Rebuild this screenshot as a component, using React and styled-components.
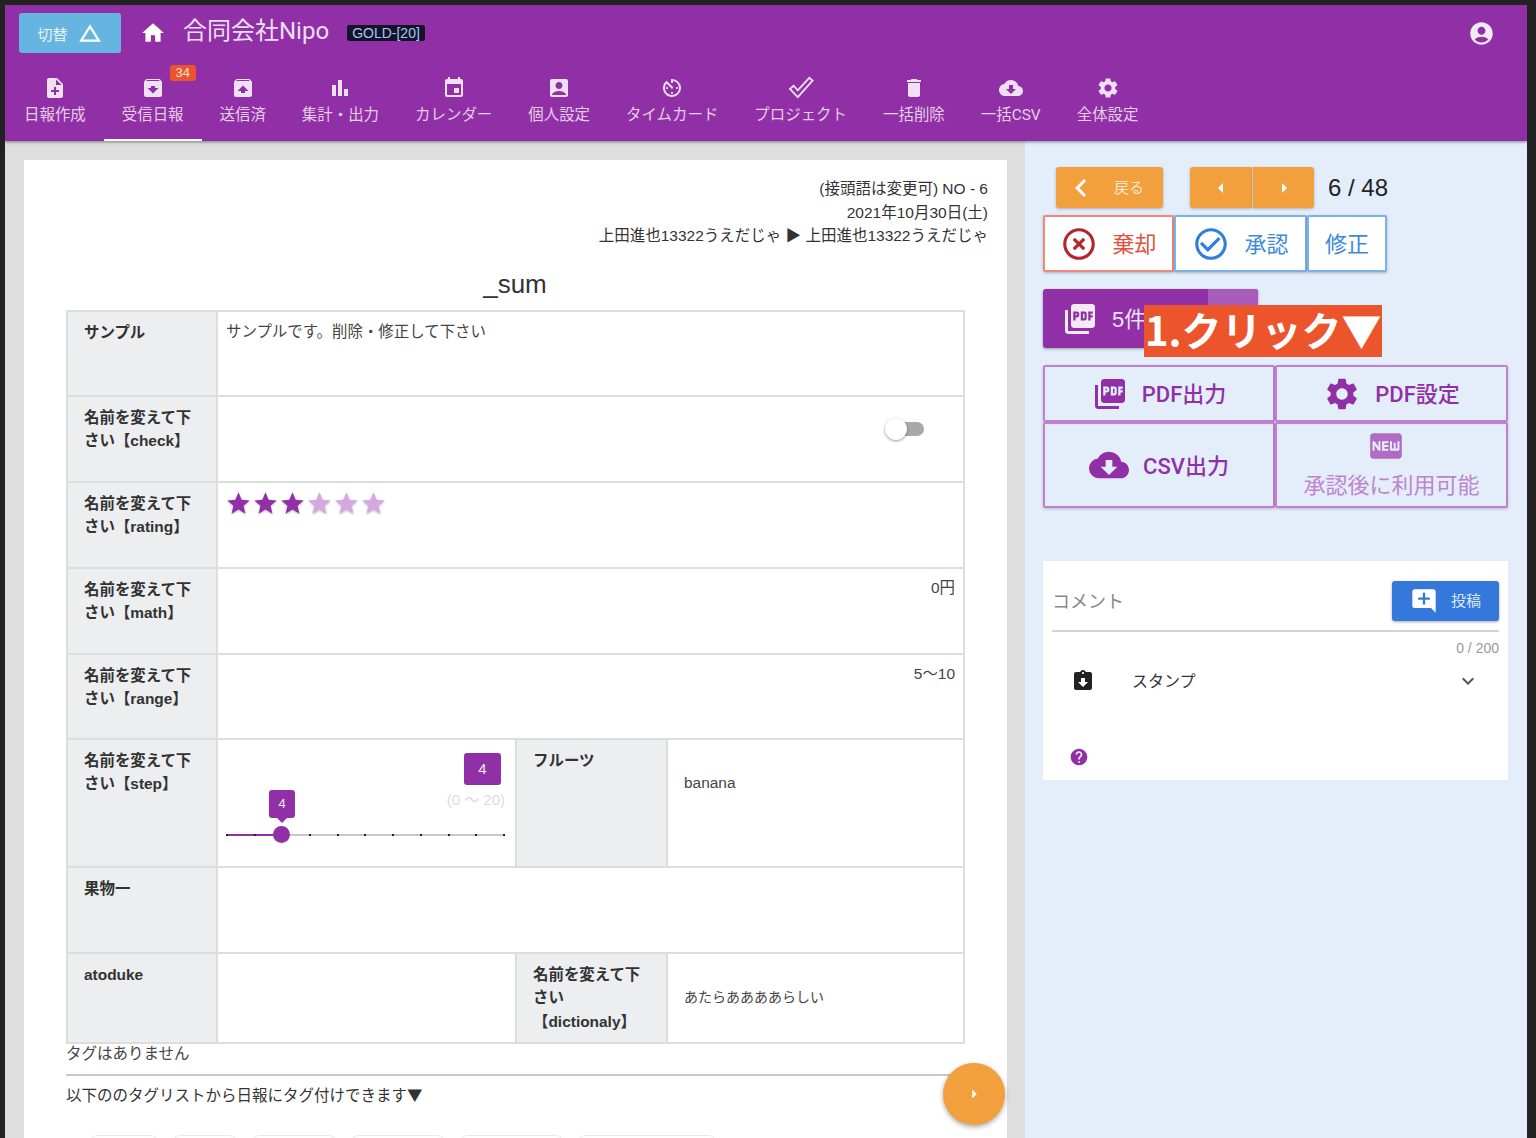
import React from 'react';
import styled, { createGlobalStyle } from 'styled-components';
import {
  MdHome, MdChangeHistory, MdNoteAdd, MdArchive, MdUnarchive, MdBarChart, MdEvent, MdAccountBox, MdAvTimer,
  MdDelete, MdCloudDownload, MdSettings, MdAccountCircle, MdPictureAsPdf, MdChevronLeft, MdArrowLeft,
  MdArrowRight, MdHighlightOff, MdCheckCircleOutline, MdFiberNew, MdAddComment, MdAssignmentReturned,
  MdExpandMore, MdHelp, MdStar,
} from 'react-icons/md';

const purple = '#9130a6';
const orange = '#f2a03d';
const sans = '"Liberation Sans", "Noto Sans CJK JP", sans-serif';

const GlobalStyle = createGlobalStyle`
  html, body {
    margin: 0;
    height: 1138px;
    overflow: hidden;
    background: #222;
  }
  * { box-sizing: border-box; }
`;

const Screen = styled.div`
  position: relative;
  width: 1522px;
  height: 1133px;
  margin: 5px 0 0 5px;
  overflow: hidden;
  font-family: ${sans};
  color: #333;
`;

const Header = styled.header`
  position: relative;
  z-index: 1;
  height: 136px;
  background: ${purple};
  color: #ecdcf0;
  box-shadow: 0 1px 3px rgba(0, 0, 0, 0.45);
`;

const TopRow = styled.div`
  display: flex;
  align-items: center;
  height: 56px;
  padding: 0 32px 0 14px;
`;

const SwitchButton = styled.button`
  display: flex;
  align-items: center;
  justify-content: center;
  gap: 9px;
  width: 102px;
  height: 40px;
  border: 0;
  border-radius: 3px;
  background: #66b5e0;
  color: #e6f3fa;
  font: 15px ${sans};
`;

const HomeLink = styled.span`
  display: flex;
  margin-left: 19px;
  color: #fff;
`;

const Title = styled.h1`
  margin: 0 0 5px 17px;
  font: 400 24px/30px Roboto, "Noto Sans CJK JP", sans-serif;
  color: #eddff1;
`;

const Plan = styled.span`
  margin-left: 18px;
  padding: 1px 5px;
  border-radius: 2px;
  background: #14132c;
  color: #a9c6ee;
  font: 14px/14px ${sans};
`;

const Account = styled.span`
  display: flex;
  margin-left: auto;
  color: #f4eaf6;
`;

const Tabs = styled.nav`
  display: flex;
  height: 80px;
  padding-left: 1px;
`;

const Tab = styled.div`
  position: relative;
  display: flex;
  flex-direction: column;
  align-items: center;
  height: 80px;
  padding: 15px 18px 0;
  border-bottom: 2px solid ${p => (p.$active ? '#fff' : 'transparent')};
  font: 15.45px/20px Roboto, "Noto Sans CJK JP", sans-serif;
  color: #e3cfe8;
  white-space: nowrap;
  svg { color: #f0e0f4; margin-bottom: 5px; }
`;

const Count = styled.span`
  position: absolute;
  top: 4px;
  left: 66px;
  width: 26px;
  height: 16px;
  border-radius: 3px;
  background: #ec552c;
  color: #fbe2d8;
  font: 13px/16px ${sans};
  text-align: center;
`;

const Body = styled.div`
  display: flex;
  height: 997px;
`;

const MainColumn = styled.main`
  width: 1020px;
  padding: 19px 18px 0 19px;
  background: #dedede;
`;

const Sheet = styled.section`
  height: 980px;
  padding: 17px 19px 0 42px;
  background: #fff;
`;

const Meta = styled.div`
  font-size: 15.5px;
  line-height: 23.5px;
  text-align: right;
  color: #333;
`;

const SheetTitle = styled.h2`
  margin: 21px 0 11px -24px;
  font: 400 26px/30px ${sans};
  text-align: center;
  color: #333;
`;

const Table = styled.div`
  display: grid;
  grid-template-columns: 150px 299px 151px 297px;
  width: 899px;
  border-top: 2px solid #ddd;
  border-left: 2px solid #ddd;
`;

const Label = styled.div`
  height: ${p => p.$h}px;
  padding: 9px 16px;
  border-right: 2px solid #ddd;
  border-bottom: 2px solid #ddd;
  background: #eceef0;
  font-size: 15.45px;
  font-weight: 700;
  line-height: 23.5px;
  color: #333;
`;

const Value = styled.div`
  grid-column: span ${p => p.$span || 1};
  display: flex;
  flex-direction: column;
  align-items: ${p => (p.$right ? 'flex-end' : 'flex-start')};
  justify-content: ${p => (p.$center ? 'center' : 'flex-start')};
  height: ${p => p.$h}px;
  padding: ${p => p.$pad || '7px 8px'};
  border-right: 2px solid #ddd;
  border-bottom: 2px solid #ddd;
  font-size: ${p => p.$size || 15.45}px;
  line-height: 23.5px;
  color: #444;
`;

const Toggle = styled.span`
  position: relative;
  display: block;
  align-self: flex-end;
  width: 28px;
  height: 14px;
  margin: 18px 31px 0 0;
  border-radius: 7px;
  background: #a9a9a9;
`;

const ToggleThumb = styled.span`
  position: absolute;
  top: -4px;
  left: -11px;
  width: 22px;
  height: 22px;
  border-radius: 50%;
  background: #fff;
  box-shadow: 0 1px 3px rgba(0, 0, 0, 0.4);
`;

const Stars = styled.div`
  display: flex;
  margin-left: -1px;
`;

const Star = styled(MdStar)`
  color: ${p => (p.$on ? purple : '#d4a9e0')};
  filter: drop-shadow(0 1px 1px rgba(0, 0, 0, 0.25));
`;

const StepCell = styled.div`
  display: flex;
  flex-direction: column;
  align-items: flex-end;
  height: 128px;
  padding: 13px 10px 0 8px;
  border-right: 2px solid #ddd;
  border-bottom: 2px solid #ddd;
`;

const StepValue = styled.span`
  width: 37px;
  height: 32px;
  margin-right: 4px;
  border-radius: 3px;
  background: ${purple};
  color: #eee;
  font-size: 15px;
  line-height: 32px;
  text-align: center;
`;

const StepRange = styled.span`
  margin-top: 4px;
  font-size: 15px;
  line-height: 22px;
  color: #dcdce4;
`;

const Slider = styled.div`
  position: relative;
  display: flex;
  justify-content: space-between;
  align-items: center;
  align-self: stretch;
  height: 2px;
  margin-top: 23px;
  background: #c8c8c8;
`;

const SliderFill = styled.span`
  position: absolute;
  left: 0;
  top: 0;
  height: 2px;
  background: ${purple};
`;

const Tick = styled.span`
  position: relative;
  width: 2px;
  height: 2px;
  background: #222;
`;

const SliderThumb = styled.span`
  position: absolute;
  top: -8px;
  left: 47px;
  width: 17px;
  height: 17px;
  border-radius: 50%;
  background: ${purple};
`;

const SliderTip = styled.span`
  position: absolute;
  top: -44px;
  left: 43px;
  width: 26px;
  height: 28px;
  border-radius: 3px;
  background: ${purple};
  color: #eee;
  font-size: 13px;
  line-height: 28px;
  text-align: center;
  &::after {
    content: '';
    position: absolute;
    left: 8px;
    bottom: -5px;
    border-top: 5px solid ${purple};
    border-left: 5px solid transparent;
    border-right: 5px solid transparent;
  }
`;

const NoTags = styled.p`
  margin: 0;
  font-size: 15.5px;
  line-height: 19px;
  color: #444;
`;

const Rule = styled.hr`
  width: 899px;
  height: 2px;
  margin: 11px 0 7px;
  border: 0;
  background: #c9c9c9;
`;

const TagHint = styled.p`
  margin: 0;
  font: 15.5px/22px "Noto Sans CJK JP", sans-serif;
  color: #333;
`;

const TagList = styled.div`
  display: flex;
  gap: 11px;
  margin: 30px 0 0 22px;
`;

const TagChip = styled.span`
  width: ${p => p.$w}px;
  height: 20px;
  border: 1px solid #e8e8e8;
  border-radius: 10px;
`;

const Fab = styled.button`
  position: absolute;
  left: 938px;
  top: 1058px;
  display: flex;
  align-items: center;
  justify-content: center;
  width: 62px;
  height: 62px;
  border: 0;
  border-radius: 50%;
  background: ${orange};
  color: #fff;
  box-shadow: 0 2px 5px rgba(0, 0, 0, 0.35);
`;

const SideColumn = styled.aside`
  display: flex;
  flex-direction: column;
  width: 502px;
  padding: 26px 19px 0 18px;
  background: #e3eefa;
`;

const PagerRow = styled.div`
  display: flex;
  align-items: center;
  height: 41px;
  margin-left: 13px;
`;

const OrangeButton = styled.button`
  display: flex;
  align-items: center;
  justify-content: center;
  width: ${p => p.$w}px;
  height: 41px;
  padding: 0;
  border: 0;
  border-radius: ${p => p.$radius || '3px'};
  background: ${orange};
  color: #fff;
  font: 15px ${sans};
  box-shadow: 0 1px 3px rgba(0, 0, 0, 0.25);
`;

const BackButton = styled(OrangeButton)`
  justify-content: flex-start;
  padding-left: 7px;
`;

const BackLabel = styled.span`
  margin: 0 0 2px 15px;
  color: #fbe6cc;
`;

const PagerGroup = styled.div`
  display: flex;
  gap: 1px;
  margin-left: 27px;
`;

const PageCount = styled.span`
  margin-left: 14px;
  font: 24px ${sans};
  color: #222;
`;

const ReviewGroup = styled.div`
  display: flex;
  height: 57px;
  margin-top: 7px;
`;

const ReviewButton = styled.button`
  display: flex;
  align-items: center;
  justify-content: center;
  gap: 14px;
  width: ${p => p.$w}px;
  height: 57px;
  padding: 0 0 3px;
  border: 2px solid ${p => p.$edge};
  border-radius: 2px;
  background: #fff;
  color: ${p => p.$color};
  font: 22px ${sans};
  box-shadow: 0 1px 3px rgba(0, 0, 0, 0.25);
  svg { margin-top: 3px; }
`;

const RejectIcon = styled(MdHighlightOff)`
  color: #b3262a;
`;

const ApproveIcon = styled(MdCheckCircleOutline)`
  color: #2f7fdb;
`;

const BulkButton = styled.button`
  display: flex;
  align-items: stretch;
  width: 215px;
  height: 59px;
  margin-top: 17px;
  padding: 0;
  border: 0;
  border-radius: 3px;
  overflow: hidden;
  background: ${purple};
  color: #f0e2f4;
  font: 22px ${sans};
  box-shadow: 0 1px 3px rgba(0, 0, 0, 0.35);
`;

const BulkMain = styled.span`
  display: flex;
  align-items: center;
  gap: 14px;
  width: 165px;
  padding: 0 0 3px 19px;
  svg { margin-top: 3px; }
`;

const BulkMore = styled.span`
  flex: 1;
  background: #a85bba;
`;

const Callout = styled.div`
  position: absolute;
  left: 1139px;
  top: 300px;
  width: 238px;
  height: 52px;
  padding-left: 1px;
  background: #ec552c;
  color: #fff;
  font: 700 40px/48px "Noto Sans CJK JP", sans-serif;
  white-space: nowrap;
`;

const ExportGrid = styled.div`
  display: grid;
  grid-template-columns: 232px 233px;
  grid-template-rows: 57px 86px;
  margin-top: 17px;
`;

const ExportButton = styled.button`
  display: flex;
  align-items: center;
  justify-content: center;
  gap: 14px;
  padding: 0 0 3px;
  border: 2px solid #c27fd2;
  border-radius: 2px;
  background: transparent;
  color: ${purple};
  font: 500 22px Roboto, "Noto Sans CJK JP", sans-serif;
  box-shadow: 0 1px 3px rgba(0, 0, 0, 0.2);
  svg { margin-top: 3px; }
`;

const ExportNote = styled(ExportButton)`
  flex-direction: column;
  gap: 2px;
  padding: 0 0 5px;
  color: #c084cf;
  font-weight: 400;
  svg { margin: 0 12px 0 0; color: #b06cc2; }
`;

const CommentCard = styled.section`
  height: 219px;
  margin-top: 53px;
  padding: 21px 9px 0;
  background: #fff;
`;

const CommentRow = styled.div`
  display: flex;
  align-items: center;
  justify-content: space-between;
  height: 50px;
  padding-bottom: 10px;
  border-bottom: 2px solid #d5d5d5;
`;

const CommentLabel = styled.span`
  margin-bottom: 2px;
  font-size: 18px;
  color: #888;
`;

const PostButton = styled.button`
  display: flex;
  align-items: center;
  justify-content: center;
  gap: 13px;
  width: 107px;
  height: 40px;
  padding: 0 0 3px;
  border: 0;
  border-radius: 3px;
  background: #3578dc;
  color: #dce9fa;
  font: 15px ${sans};
  box-shadow: 0 1px 3px rgba(0, 0, 0, 0.35);
  svg { margin-top: 3px; }
`;

const Counter = styled.div`
  margin-top: 8px;
  font-size: 14px;
  line-height: 16px;
  text-align: right;
  color: #999;
`;

const StampRow = styled.div`
  display: flex;
  align-items: center;
  height: 24px;
  margin: 13px 0 0 19px;
  font-size: 16px;
  color: #333;
  svg:first-child { color: #222; margin-right: 37px; }
`;

const StampLabel = styled.span`
  margin-bottom: 2px;
`;

const StampChevron = styled(MdExpandMore)`
  margin-left: auto;
  margin-right: 19px;
  color: #555;
`;

const HelpLink = styled.div`
  display: flex;
  margin: 54px 0 0 17px;
  color: ${purple};
`;

const CheckMark = () => (
  <svg width="26" height="24" viewBox="0 0 28 26" fill="none" stroke="#f0e0f4" strokeWidth="2">
    <path d="M2 14l4-3.5 4.5 5L23 2l3.5 3L10.5 23z" />
  </svg>
);

const tabs = [
  { label: '日報作成', icon: <MdNoteAdd size={24} /> },
  { label: '受信日報', icon: <MdArchive size={24} />, active: true, count: 34 },
  { label: '送信済', icon: <MdUnarchive size={24} /> },
  { label: '集計・出力', icon: <MdBarChart size={24} /> },
  { label: 'カレンダー', icon: <MdEvent size={24} /> },
  { label: '個人設定', icon: <MdAccountBox size={24} /> },
  { label: 'タイムカード', icon: <MdAvTimer size={24} /> },
  { label: 'プロジェクト', icon: <CheckMark /> },
  { label: '一括削除', icon: <MdDelete size={24} /> },
  { label: '一括CSV', icon: <MdCloudDownload size={24} /> },
  { label: '全体設定', icon: <MdSettings size={24} /> },
];

const ticks = Array.from({ length: 11 }, (_, i) => i);
const chipWidths = [72, 68, 88, 98, 107, 142];

const App = () => (
  <Screen>
    <GlobalStyle />
    <Header>
      <TopRow>
        <SwitchButton>切替 <MdChangeHistory size={26} color="#fff" /></SwitchButton>
        <HomeLink><MdHome size={26} /></HomeLink>
        <Title>合同会社Nipo</Title>
        <Plan>GOLD-[20]</Plan>
        <Account><MdAccountCircle size={27} /></Account>
      </TopRow>
      <Tabs>
        {tabs.map(tab => (
          <Tab key={tab.label} $active={tab.active}>
            {tab.icon}
            {tab.label}
            {tab.count && <Count>{tab.count}</Count>}
          </Tab>
        ))}
      </Tabs>
    </Header>

    <Body>
      <MainColumn>
        <Sheet>
          <Meta>
            <div>(接頭語は変更可) NO - 6</div>
            <div>2021年10月30日(土)</div>
            <div>上田進也13322うえだじゃ ▶ 上田進也13322うえだじゃ</div>
          </Meta>
          <SheetTitle>_sum</SheetTitle>
          <Table>
            <Label $h={85}>サンプル</Label>
            <Value $span={3} $h={85} $pad="8px 8px">サンプルです。削除・修正して下さい</Value>

            <Label $h={86}>名前を変えて下さい【check】</Label>
            <Value $span={3} $h={86}><Toggle><ToggleThumb /></Toggle></Value>

            <Label $h={86}>名前を変えて下さい【rating】</Label>
            <Value $span={3} $h={86}>
              <Stars>
                {[1, 2, 3, 4, 5, 6].map(n => <Star key={n} size={27} $on={n <= 3} />)}
              </Stars>
            </Value>

            <Label $h={86}>名前を変えて下さい【math】</Label>
            <Value $span={3} $h={86} $right>0円</Value>

            <Label $h={85}>名前を変えて下さい【range】</Label>
            <Value $span={3} $h={85} $right>5〜10</Value>

            <Label $h={128}>名前を変えて下さい【step】</Label>
            <StepCell>
              <StepValue>4</StepValue>
              <StepRange>(0 〜 20)</StepRange>
              <Slider>
                <SliderFill style={{ width: `${(4 / 20) * 100}%` }} />
                {ticks.map(t => <Tick key={t} />)}
                <SliderThumb />
                <SliderTip>4</SliderTip>
              </Slider>
            </StepCell>
            <Label $h={128}>フルーツ</Label>
            <Value $h={128} $pad="31px 16px">banana</Value>

            <Label $h={86}>果物一</Label>
            <Value $span={3} $h={86} />

            <Label $h={90}>atoduke</Label>
            <Value $h={90} />
            <Label $h={90}>名前を変えて下さい【dictionaly】</Label>
            <Value $h={90} $center $pad="0 16px" $size={14}>あたらああああらしい</Value>
          </Table>
          <NoTags>タグはありません</NoTags>
          <Rule />
          <TagHint>以下ののタグリストから日報にタグ付けできます▼</TagHint>
          <TagList>
            {chipWidths.map(w => <TagChip key={w} $w={w} />)}
          </TagList>
        </Sheet>
      </MainColumn>

      <SideColumn>
        <PagerRow>
          <BackButton $w={107}>
            <MdChevronLeft size={36} />
            <BackLabel>戻る</BackLabel>
          </BackButton>
          <PagerGroup>
            <OrangeButton $w={62} $radius="3px 0 0 3px"><MdArrowLeft size={24} /></OrangeButton>
            <OrangeButton $w={61} $radius="0 3px 3px 0"><MdArrowRight size={24} /></OrangeButton>
          </PagerGroup>
          <PageCount>6 / 48</PageCount>
        </PagerRow>

        <ReviewGroup>
          <ReviewButton $w={131} $color="#e2513f" $edge="#ee8a7c"><RejectIcon size={38} />棄却</ReviewButton>
          <ReviewButton $w={133} $color="#3c8ad8" $edge="#7db2e8"><ApproveIcon size={38} />承認</ReviewButton>
          <ReviewButton $w={80} $color="#3c8ad8" $edge="#7db2e8">修正</ReviewButton>
        </ReviewGroup>

        <BulkButton>
          <BulkMain><MdPictureAsPdf size={36} color="#f4e9f6" />5件</BulkMain>
          <BulkMore />
        </BulkButton>

        <ExportGrid>
          <ExportButton><MdPictureAsPdf size={36} />PDF出力</ExportButton>
          <ExportButton><MdSettings size={38} />PDF設定</ExportButton>
          <ExportButton><MdCloudDownload size={40} />CSV出力</ExportButton>
          <ExportNote><MdFiberNew size={38} />承認後に利用可能</ExportNote>
        </ExportGrid>

        <CommentCard>
          <CommentRow>
            <CommentLabel>コメント</CommentLabel>
            <PostButton><MdAddComment size={28} color="#fff" />投稿</PostButton>
          </CommentRow>
          <Counter>0 / 200</Counter>
          <StampRow>
            <MdAssignmentReturned size={24} />
            <StampLabel>スタンプ</StampLabel>
            <StampChevron size={24} />
          </StampRow>
          <HelpLink><MdHelp size={20} /></HelpLink>
        </CommentCard>
      </SideColumn>
    </Body>

    <Callout>1.クリック▼</Callout>
    <Fab><MdArrowRight size={22} /></Fab>
  </Screen>
);

export default App;
